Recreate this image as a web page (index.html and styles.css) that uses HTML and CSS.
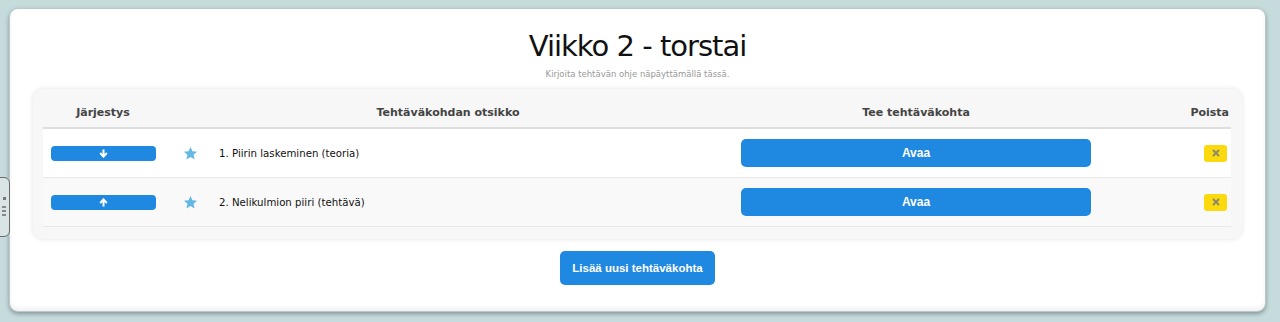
FILE: index.html
```html
<!DOCTYPE html>
<html lang="fi">
<head>
  <meta charset="UTF-8" />
  <title>Viikko 2 - torstai</title>
  <link rel="stylesheet" href="styles.css">
</head>
<body>

  <div class="side-handle">
    <span class="handle-dot"></span>
    <span class="handle-lines"></span>
  </div>

  <div class="page-card">
    <h1>Viikko 2 - torstai</h1>
    <p class="subtitle">Kirjoita tehtävän ohje näpäyttämällä tässä.</p>

    <div class="task-panel">
      <div class="task-row head-row">
        <div class="col-order">Järjestys</div>
        <div class="col-title-head">Tehtäväkohdan otsikko</div>
        <div class="col-open">Tee tehtäväkohta</div>
        <div class="col-delete">Poista</div>
      </div>

      <div class="task-row item-row">
        <div class="col-order">
          <button class="order-btn" title="Siirrä alas">
            <svg width="9" height="9" viewBox="0 0 9 9"><path d="M4.5 0.5v6M1.2 4l3.3 3.6L7.8 4" fill="none" stroke="#fff" stroke-width="2"/></svg>
          </button>
        </div>
        <div class="col-star">
          <svg width="15" height="15" viewBox="0 0 24 24"><path d="M12 1.5l3.1 7 7.4.6-5.6 5 1.7 7.4L12 17.6l-6.6 3.9 1.7-7.4-5.6-5 7.4-.6z" fill="#63b8e6"/></svg>
        </div>
        <div class="col-title">1. Piirin laskeminen (teoria)</div>
        <div class="col-open"><button class="open-btn">Avaa</button></div>
        <div class="col-delete">
          <button class="delete-btn" title="Poista">
            <svg width="8" height="8" viewBox="0 0 8 8"><path d="M1 1l6 6M7 1L1 7" stroke="#8a8a6a" stroke-width="2"/></svg>
          </button>
        </div>
      </div>

      <div class="task-row item-row alt">
        <div class="col-order">
          <button class="order-btn" title="Siirrä ylös">
            <svg width="9" height="9" viewBox="0 0 9 9"><path d="M4.5 8.5v-6M1.2 5l3.3-3.6L7.8 5" fill="none" stroke="#fff" stroke-width="2"/></svg>
          </button>
        </div>
        <div class="col-star">
          <svg width="15" height="15" viewBox="0 0 24 24"><path d="M12 1.5l3.1 7 7.4.6-5.6 5 1.7 7.4L12 17.6l-6.6 3.9 1.7-7.4-5.6-5 7.4-.6z" fill="#63b8e6"/></svg>
        </div>
        <div class="col-title">2. Nelikulmion piiri (tehtävä)</div>
        <div class="col-open"><button class="open-btn">Avaa</button></div>
        <div class="col-delete">
          <button class="delete-btn" title="Poista">
            <svg width="8" height="8" viewBox="0 0 8 8"><path d="M1 1l6 6M7 1L1 7" stroke="#8a8a6a" stroke-width="2"/></svg>
          </button>
        </div>
      </div>
    </div>

    <div class="add-row">
      <button class="add-btn">Lisää uusi tehtäväkohta</button>
    </div>
  </div>

</body>
</html>
```

FILE: styles.css
```css
* {
  box-sizing: border-box;
}
body {
  margin: 0;
  height: 322px;
  overflow: hidden;
  background-color: #c6dcdc;
  font-family: "DejaVu Sans", Verdana, sans-serif;
  padding: 8px 14px 0 9px;
}
.side-handle {
  position: absolute;
  left: -6px;
  top: 177px;
  width: 16px;
  height: 60px;
  background-color: #d9e4e4;
  border: 1px solid #6b6b6b;
  border-radius: 6px;
  display: flex;
  flex-direction: column;
  align-items: flex-end;
  justify-content: center;
  gap: 6px;
  padding-right: 3px;
}
.handle-dot {
  width: 3px;
  height: 3px;
  background-color: #777;
}
.handle-lines {
  width: 4px;
  height: 12px;
  background: repeating-linear-gradient(#888 0 2px, transparent 2px 4px);
}
.page-card {
  width: 1257px;
  height: 304px;
  background-color: white;
  border-radius: 9px;
  border: 1px solid #b9c9c9;
  box-shadow: 0 2px 4px rgba(60, 60, 80, 0.45), inset 0 -3px 4px rgba(0, 0, 0, 0.06);
  padding-top: 20px;
}
h1 {
  margin: 0;
  text-align: center;
  font-size: 29px;
  letter-spacing: -1px;
  line-height: 34px;
  font-weight: normal;
  color: #111;
}
.subtitle {
  margin: 5px 0 9px;
  text-align: center;
  font-size: 8.5px;
  line-height: 12px;
  color: #999;
}
.task-panel {
  margin: 0 23px;
  background-color: #f7f7f7;
  border-radius: 10px;
  box-shadow: 0 0 5px rgba(0, 0, 0, 0.12);
  padding: 10px 11px 12px 10px;
}
.task-row {
  display: grid;
  grid-template-columns: 120px 47px 1fr 366px 132px;
  align-items: center;
}
.head-row {
  height: 30px;
  border-bottom: 2px solid #dedede;
  font-size: 11px;
  font-weight: bold;
  color: #444;
  padding-bottom: 2px;
}
.head-row .col-order,
.head-row .col-open {
  text-align: center;
}
.col-title-head {
  grid-column: 2 / 4;
  text-align: center;
}
.head-row .col-delete {
  text-align: right;
  padding-right: 2px;
}
.item-row {
  height: 49px;
  background-color: white;
  border-bottom: 1px solid #e8e8e8;
  font-size: 10.2px;
  color: #111;
}
.item-row.alt {
  background-color: #f9f9f9;
}
.item-row .col-order {
  padding-left: 8px;
}
.col-star {
  display: flex;
  justify-content: center;
  padding-left: 7px;
}
.col-title {
  padding-left: 9px;
}
.item-row .col-open {
  padding: 0 8px;
}
.item-row .col-delete {
  display: flex;
  justify-content: flex-end;
  padding-right: 4px;
}
button {
  border: none;
  cursor: pointer;
  color: white;
  font-family: "Liberation Sans", Arial, sans-serif;
  font-weight: bold;
}
.order-btn {
  width: 105px;
  height: 15px;
  border-radius: 4px;
  background-color: #1f88e0;
  display: flex;
  align-items: center;
  justify-content: center;
  padding: 0;
}
.open-btn {
  width: 100%;
  height: 28px;
  border-radius: 5px;
  background-color: #1f88e0;
  font-size: 12px;
}
.delete-btn {
  width: 23px;
  height: 17px;
  border-radius: 3px;
  background-color: #fcd90c;
  display: flex;
  align-items: center;
  justify-content: center;
  padding: 0;
}
.add-row {
  display: flex;
  justify-content: center;
  margin-top: 12px;
}
.add-btn {
  width: 155px;
  height: 34px;
  border-radius: 5px;
  background-color: #1f88e0;
  font-size: 11.5px;
}
.open-btn:hover,
.add-btn:hover,
.order-btn:hover {
  background-color: #1670c0;
}
```
